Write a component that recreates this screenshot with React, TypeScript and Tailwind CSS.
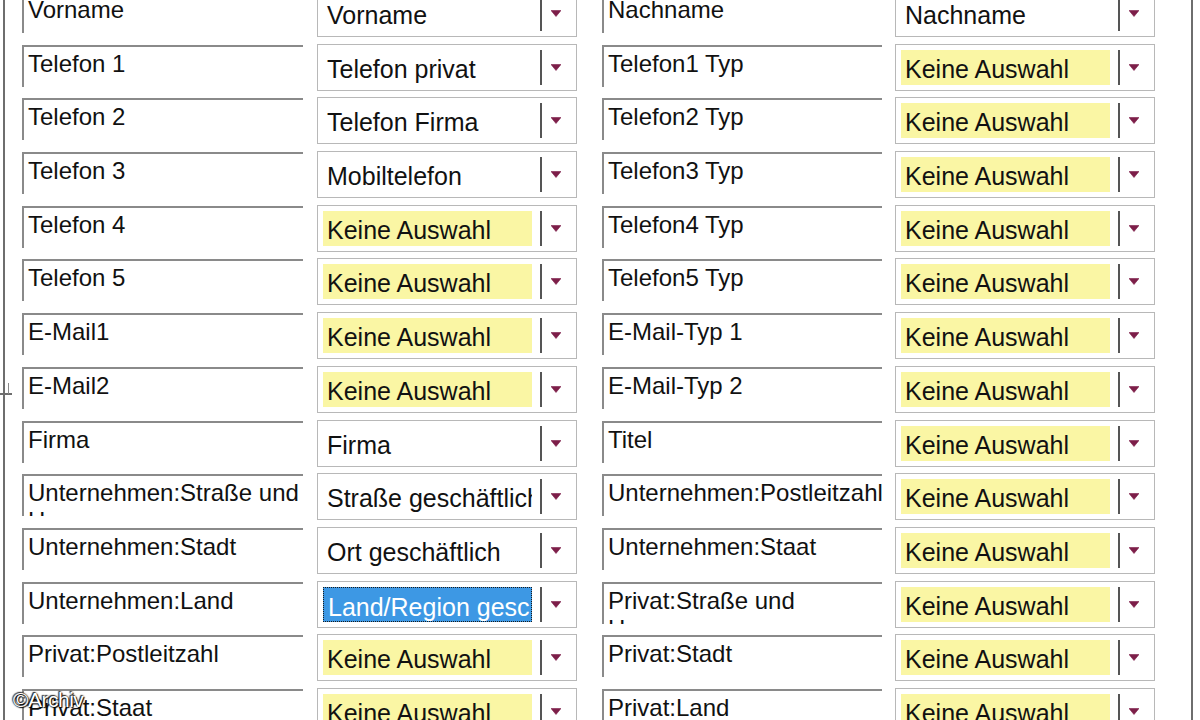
import React from 'react'

type Row = {
  a: string
  aVal: string
  b: string
  bVal: string
  selected?: boolean
}

const NONE = 'Keine Auswahl'

const rows: Row[] = [
  { a: 'Vorname', aVal: 'Vorname', b: 'Nachname', bVal: 'Nachname' },
  { a: 'Telefon 1', aVal: 'Telefon privat', b: 'Telefon1 Typ', bVal: NONE },
  { a: 'Telefon 2', aVal: 'Telefon Firma', b: 'Telefon2 Typ', bVal: NONE },
  { a: 'Telefon 3', aVal: 'Mobiltelefon', b: 'Telefon3 Typ', bVal: NONE },
  { a: 'Telefon 4', aVal: NONE, b: 'Telefon4 Typ', bVal: NONE },
  { a: 'Telefon 5', aVal: NONE, b: 'Telefon5 Typ', bVal: NONE },
  { a: 'E-Mail1', aVal: NONE, b: 'E-Mail-Typ 1', bVal: NONE },
  { a: 'E-Mail2', aVal: NONE, b: 'E-Mail-Typ 2', bVal: NONE },
  { a: 'Firma', aVal: 'Firma', b: 'Titel', bVal: NONE },
  { a: 'Unternehmen:Straße und Hausnummer', aVal: 'Straße geschäftlich', b: 'Unternehmen:Postleitzahl', bVal: NONE },
  { a: 'Unternehmen:Stadt', aVal: 'Ort geschäftlich', b: 'Unternehmen:Staat', bVal: NONE },
  { a: 'Unternehmen:Land', aVal: 'Land/Region geschäftlich', b: 'Privat:Straße und Hausnummer', bVal: NONE, selected: true },
  { a: 'Privat:Postleitzahl', aVal: NONE, b: 'Privat:Stadt', bVal: NONE },
  { a: 'Privat:Staat', aVal: NONE, b: 'Privat:Land', bVal: NONE },
]

function FieldLabel({ text, width }: { text: string; width: string }) {
  return (
    <div className={`${width} h-[42px] mt-[1px] border-t-2 border-l-2 border-[#8a8a8a] overflow-hidden pl-[4px] pt-[3px] text-[24px] leading-[28px] text-[#111]`}>
      {text}
    </div>
  )
}

function Combo({ value, selected }: { value: string; selected?: boolean }) {
  const none = value === NONE
  let box = 'bg-white text-[#111]'
  if (none) box = 'bg-[#faf6a4] text-[#111]'
  if (selected) box = 'bg-[#3d98e4] text-white border border-dotted border-[#1a1a1a]'

  return (
    <div className="w-[260px] h-[47px] border border-[#b8b8b8] p-[5px] flex">
      <div className={`w-[209px] overflow-hidden whitespace-nowrap pl-[4px] pt-[3px] text-[25px] leading-[32px] ${box}`}>
        {value}
      </div>
      <div className="ml-[8px] w-[2px] bg-[#555]" />
      <div className="flex-1 flex items-center justify-center pr-[2px]">
        <svg width="10" height="7" viewBox="0 0 10 7">
          <path d="M0 0.5 L10 0.5 L5 6.5 Z" fill="#7d1f49" stroke="#7d1f49" strokeWidth="0.6" strokeLinejoin="round" />
        </svg>
      </div>
    </div>
  )
}

export default function App() {
  return (
    <div
      className="relative w-[1200px] h-[720px] overflow-hidden bg-white flex"
      style={{ fontFamily: '"Liberation Sans", Arial, sans-serif' }}
    >
      <div className="ml-[3px] w-[2px] h-full bg-[#6e6e6e]" />
      <div className="flex flex-col mt-[-10px] pl-[17px]">
        {rows.map((r) => (
          <div key={r.a} className="h-[53.7px] shrink-0 flex items-start">
            <FieldLabel text={r.a} width="w-[281px]" />
            <div className="ml-[14px]">
              <Combo value={r.aVal} selected={r.selected} />
            </div>
            <div className="ml-[25px]">
              <FieldLabel text={r.b} width="w-[280px]" />
            </div>
            <div className="ml-[13px]">
              <Combo value={r.bVal} />
            </div>
          </div>
        ))}
      </div>
      <div className="ml-[36px] w-[2px] h-full bg-[#6e6e6e]" />

      <div className="absolute left-0 top-[393px] w-[12px] h-[2px] bg-[#6e6e6e]" />
      <div className="absolute left-[8px] top-[383px] w-[1px] h-[11px] bg-[#8a8a8a]" />

      <div className="absolute left-[13px] top-[684px] text-[21px] text-white tracking-[-0.5px] [text-shadow:0_0_2px_#000,1px_1px_1px_#000,-1px_-1px_1px_#333]">
        ©Archiv
      </div>
    </div>
  )
}
